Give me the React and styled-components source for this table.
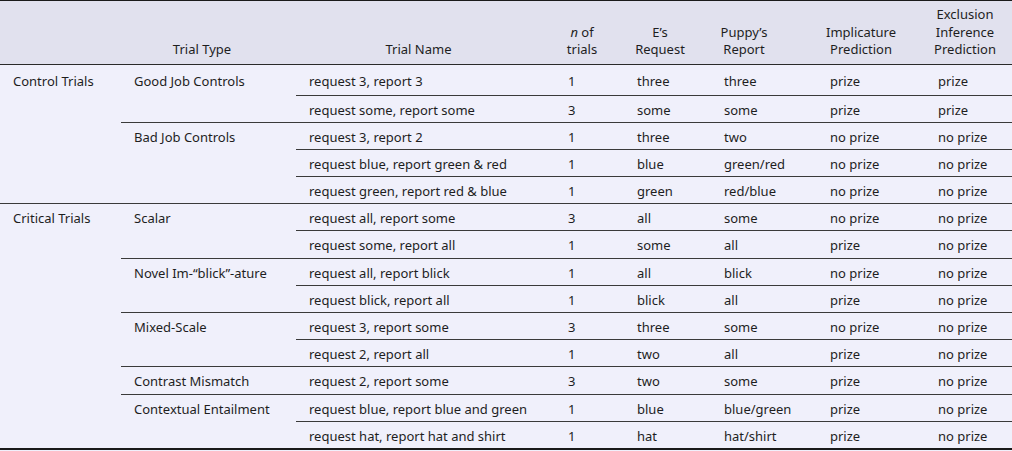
import React from "react";
import styled, { createGlobalStyle } from "styled-components";

const Global = createGlobalStyle`
  html, body { margin: 0; padding: 0; background: #f0f0fb; }
  body { font-family: "Noto Sans", "Open Sans", sans-serif; color: #1e1e1e; }
`;

const Table = styled.table`
  width: 1012px;
  table-layout: fixed;
  border-collapse: separate;
  border-spacing: 0;
  border-top: 1px solid #1a1a1a;
  border-bottom: 2px solid #1a1a1a;
  font-size: 13px;
  background: #f0f0fb;
`;

const Head = styled.thead`
  background: #e1e1ee;
`;

const HeadCell = styled.th`
  font-weight: 400;
  text-align: center;
  vertical-align: bottom;
  line-height: 17.5px;
  padding: 5px ${(p) => p.$pr ?? 13}px 5px ${(p) => p.$pl ?? 13}px;
  border-bottom: 1px solid #2a2a2a;
  white-space: nowrap;
`;

const Cell = styled.td`
  text-align: left;
  vertical-align: top;
  line-height: 17px;
  padding: ${(p) => (p.$first ? "8.5px 13px 4.5px" : "6px 13px 3.2px")};
  border-bottom: ${(p) => (p.$noLine ? "none" : "1px solid #3a3a3a")};
  white-space: nowrap;
`;

const columns = [121, 175, 259, 69, 87, 106, 108, 87];

const headers = [
  { lines: [""], pl: 13, pr: 13 },
  { lines: ["Trial Type"], pl: 13, pr: 26 },
  { lines: ["Trial Name"], pl: 13, pr: 27 },
  { lines: [<><i>n</i> of</>, "trials"], pl: 8, pr: 23 },
  { lines: ["E’s", "Request"], pl: 8, pr: 23 },
  { lines: ["Puppy’s", "Report"], pl: 8, pr: 48 },
  { lines: ["Implicature", "Prediction"], pl: 8, pr: 28 },
  { lines: ["Exclusion", "Inference", "Prediction"], pl: 8, pr: 15 },
];

const groups = [
  {
    type: "Control Trials",
    subs: [
      {
        name: "Good Job Controls",
        rows: [
          ["request 3, report 3", "1", "three", "three", "prize", "prize"],
          ["request some, report some", "3", "some", "some", "prize", "prize"],
        ],
      },
      {
        name: "Bad Job Controls",
        rows: [
          ["request 3, report 2", "1", "three", "two", "no prize", "no prize"],
          ["request blue, report green & red", "1", "blue", "green/red", "no prize", "no prize"],
          ["request green, report red & blue", "1", "green", "red/blue", "no prize", "no prize"],
        ],
      },
    ],
  },
  {
    type: "Critical Trials",
    subs: [
      {
        name: "Scalar",
        rows: [
          ["request all, report some", "3", "all", "some", "no prize", "no prize"],
          ["request some, report all", "1", "some", "all", "prize", "no prize"],
        ],
      },
      {
        name: "Novel Im-“blick”-ature",
        rows: [
          ["request all, report blick", "1", "all", "blick", "no prize", "no prize"],
          ["request blick, report all", "1", "blick", "all", "prize", "no prize"],
        ],
      },
      {
        name: "Mixed-Scale",
        rows: [
          ["request 3, report some", "3", "three", "some", "no prize", "no prize"],
          ["request 2, report all", "1", "two", "all", "prize", "no prize"],
        ],
      },
      {
        name: "Contrast Mismatch",
        rows: [["request 2, report some", "3", "two", "some", "prize", "no prize"]],
      },
      {
        name: "Contextual Entailment",
        rows: [
          ["request blue, report blue and green", "1", "blue", "blue/green", "prize", "no prize"],
          ["request hat, report hat and shirt", "1", "hat", "hat/shirt", "prize", "no prize"],
        ],
      },
    ],
  },
];

export default function App() {
  const body = [];
  let isFirst = true;
  groups.forEach((g, gi) => {
    const lastGroup = gi === groups.length - 1;
    const groupSpan = g.subs.reduce((n, s) => n + s.rows.length, 0);
    g.subs.forEach((s, si) => {
      const lastSub = lastGroup && si === g.subs.length - 1;
      s.rows.forEach((r, ri) => {
        const first = isFirst;
        isFirst = false;
        const lastRow = lastSub && ri === s.rows.length - 1;
        body.push(
          <tr key={`${gi}-${si}-${ri}`}>
            {si === 0 && ri === 0 && (
              <Cell rowSpan={groupSpan} $first={first} $noLine={lastGroup}>
                {g.type}
              </Cell>
            )}
            {ri === 0 && (
              <Cell rowSpan={s.rows.length} $first={first} $noLine={lastSub}>
                {s.name}
              </Cell>
            )}
            {r.map((v, ci) => (
              <Cell key={ci} $first={first} $noLine={lastRow}>
                {v}
              </Cell>
            ))}
          </tr>
        );
      });
    });
  });

  return (
    <>
      <Global />
      <Table>
        <colgroup>
          {columns.map((w, i) => (
            <col key={i} style={{ width: w }} />
          ))}
        </colgroup>
        <Head>
          <tr>
            {headers.map((h, i) => (
              <HeadCell key={i} $pl={h.pl} $pr={h.pr}>
                {h.lines.map((l, li) => (
                  <React.Fragment key={li}>
                    {li > 0 && <br />}
                    {l}
                  </React.Fragment>
                ))}
              </HeadCell>
            ))}
          </tr>
        </Head>
        <tbody>{body}</tbody>
      </Table>
    </>
  );
}
